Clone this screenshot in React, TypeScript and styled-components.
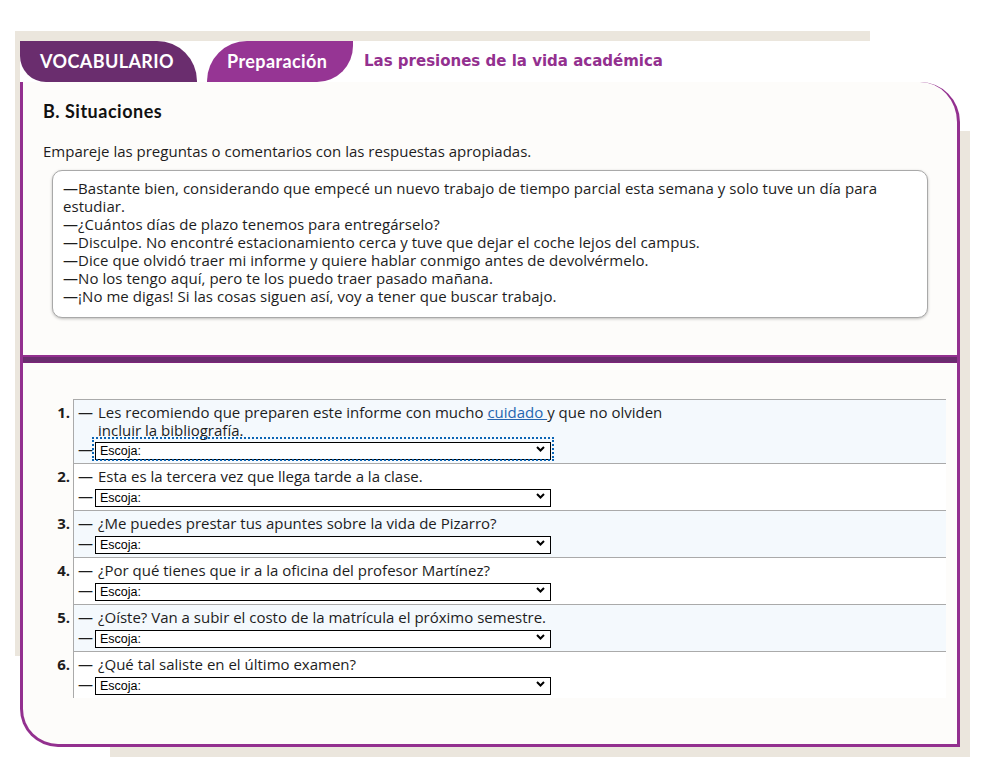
import styled, {createGlobalStyle} from "styled-components";

const GlobalStyle = createGlobalStyle`
    body {
        margin: 0;
        background: #fff;
        font-family: "Open Sans", Lato, sans-serif;
        color: #1d1d1d;
    }
`;

const Page = styled.div`
    position: relative;
    width: 987px;
    height: 765px;
    box-sizing: border-box;
    padding: 41px 0 0 20px;

    // beige paper sheets lying behind the card
    &::before, &::after {
        content: "";
        position: absolute;
        background: #ebe6dd;
        z-index: 0;
    }
    &::before {
        left: 15px;
        top: 31px;
        width: 855px;
        height: 625px;
    }
    &::after {
        left: 110px;
        top: 131px;
        width: 860px;
        height: 626px;
    }
`;

const Frame = styled.div`
    position: relative;
    z-index: 1;
    width: 940px;
`;

const TabBar = styled.div`
    display: flex;
    align-items: center;
    height: 41px;
    background: #fff;
`;

const Tab = styled.div<{ $variant: "dark" | "light" }>`
    height: 41px;
    box-sizing: border-box;
    display: flex;
    align-items: center;
    padding: 0 0 2px 20px;
    color: #fff;
    font-family: Lato, sans-serif;
    font-weight: 700;
    font-size: 18px;
    letter-spacing: 0.4px;
    background: ${p => p.$variant === "dark" ? "#6a2d6e" : "#963594"};
    width: ${p => p.$variant === "dark" ? "177px" : "146px"};
    margin-right: ${p => p.$variant === "dark" ? "10px" : "11px"};
    border-radius: ${p => p.$variant === "dark" ? "0 40px 0 26px" : "40px 0 36px 0"};
`;

const PageTitle = styled.div`
    font-family: "DejaVu Sans", Verdana, sans-serif;
    font-weight: 700;
    font-size: 15px;
    color: #93308f;
    padding-bottom: 2px;
`;

const Card = styled.div`
    height: 665px;
    box-sizing: border-box;
    background: #fdfcfa;
    border: 3px solid #93308f;
    border-top: 0;
    border-radius: 0 40px 0 38px;
`;

const Intro = styled.div`
    padding: 18px 20px 0 20px;
`;

const SectionTitle = styled.h2`
    margin: 0;
    font-family: Lato, sans-serif;
    font-size: 18px;
    letter-spacing: 0.5px;
    line-height: 22px;
    font-weight: 700;
    color: #111;
`;

const Instructions = styled.p`
    margin: 20px 0 0 0;
    font-size: 15px;
    line-height: 18px;
`;

const AnswerBox = styled.div`
    margin: 10px 9px 0 9px;
    padding: 8px 10px 12px 10px;
    border: 1px solid #a9a9a9;
    border-radius: 10px;
    box-shadow: 0 1px 3px rgba(0, 0, 0, 0.25);
    background: #fff;
    font-size: 15px;
    letter-spacing: 0.05px;
    line-height: 18px;
`;

const Divider = styled.div`
    margin-top: 37px;
    height: 5px;
    background: #6a2d6e;
    border-top: 2px solid #93308f;
    border-bottom: 1px solid #7c2379;
`;

const List = styled.ol`
    list-style: none;
    margin: 36px 11px 0 0;
    padding: 0;
`;

const Row = styled.li`
    display: grid;
    grid-template-columns: 47px 1fr;
    column-gap: 3px;
`;

const Num = styled.div`
    text-align: right;
    font-weight: 700;
    font-size: 15px;
    line-height: 18px;
    padding-top: 4px;
`;

const Item = styled.div<{ $shaded: boolean }>`
    border-top: 1px solid #aaa;
    border-left: 1px solid #aaa;
    background: ${p => p.$shaded ? "#f4f9fd" : "#fff"};
    padding: 3px 0 4px 4px;
    font-size: 15px;
    line-height: 18px;
`;

const Prompt = styled.div`
    display: flex;
    min-height: 19px;
`;

const Dash = styled.span<{ $wide?: boolean }>`
    flex: none;
    width: ${p => p.$wide ? "20px" : "17px"};
`;

const PromptText = styled.span`
    max-width: 595px;
`;

const Link = styled.a`
    color: #2566b0;
    text-decoration: underline;
`;

const AnswerRow = styled.div`
    display: flex;
    align-items: center;
    height: 20px;
`;

const SelectWrap = styled.div<{ $focused?: boolean }>`
    position: relative;
    width: 456px;
    height: 18px;
    outline: ${p => p.$focused ? "2px dotted #0a64b4" : "none"};
    outline-offset: 1px;
`;

const Select = styled.select`
    appearance: none;
    width: 100%;
    height: 100%;
    box-sizing: border-box;
    margin: 0;
    padding: 0 0 0 4px;
    border: 1px solid #000;
    border-radius: 0;
    background: #fff;
    color: #000;
    font-family: "Liberation Sans", Arial, sans-serif;
    font-size: 12.5px;
    outline: none;
`;

const Chevron = styled.svg`
    position: absolute;
    right: 6px;
    top: 6px;
    pointer-events: none;
`;

type Question = { text: React.ReactNode };

const questions: Question[] = [
    {
        text: <>Les recomiendo que preparen este informe con mucho <Link href="#">cuidado </Link> y que no olviden incluir la bibliografía.</>
    },
    {text: "Esta es la tercera vez que llega tarde a la clase."},
    {text: "¿Me puedes prestar tus apuntes sobre la vida de Pizarro?"},
    {text: "¿Por qué tienes que ir a la oficina del profesor Martínez?"},
    {text: "¿Oíste? Van a subir el costo de la matrícula el próximo semestre."},
    {text: "¿Qué tal saliste en el último examen?"},
];

const answers = [
    "—Bastante bien, considerando que empecé un nuevo trabajo de tiempo parcial esta semana y solo tuve un día para estudiar.",
    "—¿Cuántos días de plazo tenemos para entregárselo?",
    "—Disculpe. No encontré estacionamiento cerca y tuve que dejar el coche lejos del campus.",
    "—Dice que olvidó traer mi informe y quiere hablar conmigo antes de devolvérmelo.",
    "—No los tengo aquí, pero te los puedo traer pasado mañana.",
    "—¡No me digas! Si las cosas siguen así, voy a tener que buscar trabajo.",
];

const Dropdown = ({focused}: { focused?: boolean }) => (
    <SelectWrap $focused={focused}>
        <Select defaultValue="">
            <option value="">Escoja:</option>
        </Select>
        <Chevron width="9" height="6" viewBox="0 0 9 6">
            <path d="M1 1l3.5 3.5L8 1" fill="none" stroke="#000" strokeWidth="2"/>
        </Chevron>
    </SelectWrap>
);

export default function App() {
    return (
        <Page>
            <GlobalStyle/>
            <Frame>
                <TabBar>
                    <Tab $variant="dark">VOCABULARIO</Tab>
                    <Tab $variant="light">Preparación</Tab>
                    <PageTitle>Las presiones de la vida académica</PageTitle>
                </TabBar>
                <Card>
                    <Intro>
                        <SectionTitle>B. Situaciones</SectionTitle>
                        <Instructions>Empareje las preguntas o comentarios con las respuestas apropiadas.</Instructions>
                        <AnswerBox>
                            {answers.map(a => <div key={a}>{a}</div>)}
                        </AnswerBox>
                    </Intro>
                    <Divider/>
                    <List>
                        {questions.map((q, i) => (
                            <Row key={i}>
                                <Num>{i + 1}.</Num>
                                <Item $shaded={i % 2 === 0}>
                                    <Prompt>
                                        <Dash $wide>—</Dash>
                                        <PromptText>{q.text}</PromptText>
                                    </Prompt>
                                    <AnswerRow>
                                        <Dash>—</Dash>
                                        <Dropdown focused={i === 0}/>
                                    </AnswerRow>
                                </Item>
                            </Row>
                        ))}
                    </List>
                </Card>
            </Frame>
        </Page>
    );
}
